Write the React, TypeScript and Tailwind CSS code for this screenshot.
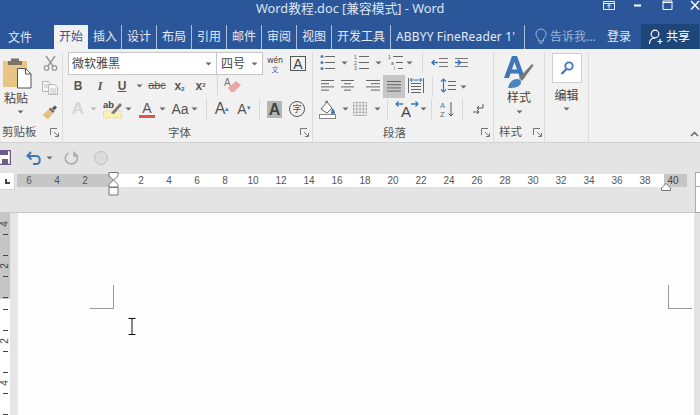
import React from "react";

// Word ribbon screenshot, everything is fixed to the 700x415 window
const tabs = [
  ["插入", "w-[34px]"],
  ["设计", "w-[35px]"],
  ["布局", "w-[35px]"],
  ["引用", "w-[35px]"],
  ["邮件", "w-[35px]"],
  ["审阅", "w-[35px]"],
  ["视图", "w-[35px]"],
  ["开发工具", "w-[59px]"],
];

const rulerMid = [2, 4, 6, 8, 10, 12, 14, 16, 18, 20, 22, 24, 26, 28, 30, 32, 34, 36, 38];

function Arrow({ className = "" }: { className?: string }) {
  return (
    <svg width="7" height="4" viewBox="0 0 7 4" className={className}>
      <path d="M0.5 0.5h6L3.5 3.5z" fill="#6a6a6a" />
    </svg>
  );
}

function Launcher() {
  return (
    <svg width="9" height="9" viewBox="0 0 9 9">
      <path d="M0.5 7V0.5H7M8.5 8.5L4 4M8.5 5v3.5H5" fill="none" stroke="#777" strokeWidth="1" />
    </svg>
  );
}

function Sep({ className = "" }: { className?: string }) {
  return <div className={`w-px h-[21px] bg-[#d8d8d8] shrink-0 ${className}`} />;
}

function Lines({ kind }: { kind: "left" | "center" | "right" | "justify" }) {
  const rows: [number, number][] =
    kind === "left"
      ? [[1, 14], [1, 9], [1, 14], [1, 9]]
      : kind === "center"
        ? [[1, 14], [4, 11], [1, 14], [4, 11]]
        : kind === "right"
          ? [[1, 15], [6, 15], [1, 15], [6, 15]]
          : [[1, 15], [1, 15], [1, 15], [1, 15]];
  return (
    <svg width="16" height="13" viewBox="0 0 16 13" className="block">
      {rows.map(([a, b], i) => (
        <path key={i} d={`M${a} ${1.5 + i * 3.2}H${b}`} stroke="#666" strokeWidth="1" />
      ))}
    </svg>
  );
}

function ListIcon({ kind }: { kind: "bullet" | "number" | "multi" }) {
  return (
    <svg width="15" height="17" viewBox="0 0 15 17">
      {kind === "bullet" && (
        <g fill="#4a7fb5">
          <circle cx="2" cy="2.5" r="1.5" />
          <circle cx="2" cy="8.5" r="1.5" />
          <circle cx="2" cy="14.5" r="1.5" />
        </g>
      )}
      {kind === "number" && (
        <g fill="#555" fontSize="5" fontFamily="Liberation Sans, sans-serif">
          <text x="0" y="5">1</text>
          <text x="0" y="11">2</text>
          <text x="0" y="16">3</text>
        </g>
      )}
      {kind === "multi" && (
        <g fill="#555" fontSize="5" fontFamily="Liberation Sans, sans-serif">
          <text x="0" y="5">1</text>
          <text x="3" y="11">a</text>
          <text x="6" y="16">i</text>
        </g>
      )}
      <path
        d={kind === "multi" ? "M5 2.5H15M8 8.5H15M10 14.5H15" : "M5 2.5H15M5 8.5H15M5 14.5H15"}
        stroke="#666"
        strokeWidth="1"
      />
    </svg>
  );
}

function PasteIcon() {
  return (
    <svg width="30" height="32" viewBox="0 0 30 32">
      <rect x="0" y="4" width="24" height="26" fill="#e9c583" />
      <path d="M8 4V1.5h8V4h3v4H5V4z" fill="#7d7468" />
      <path d="M14.5 11.5h8l5.5 5.5v14h-13.5z" fill="#fff" stroke="#555" strokeWidth="1" />
      <path d="M22.5 11.5V17H28" fill="none" stroke="#555" strokeWidth="1" />
    </svg>
  );
}

function CutIcon() {
  return (
    <svg width="15" height="16" viewBox="0 0 15 16">
      <path d="M3 1L10 11M12 1L5 11" stroke="#9a9a9a" strokeWidth="1.6" />
      <circle cx="3.5" cy="13" r="2.3" fill="none" stroke="#9a9a9a" strokeWidth="1.3" />
      <circle cx="11.5" cy="13" r="2.3" fill="none" stroke="#9a9a9a" strokeWidth="1.3" />
    </svg>
  );
}

function CopyIcon() {
  return (
    <svg width="16" height="14" viewBox="0 0 16 14">
      <path d="M0.5 0.5h6l2 2v8h-8z" fill="#f6f6f6" stroke="#b5b5b5" />
      <path d="M6.5 3.5h6l3 3v7h-9z" fill="#f6f6f6" stroke="#b5b5b5" />
      <path d="M8 8h6M8 10h6M8 12h6M2 4h4M2 6h4" stroke="#c4c4c4" />
    </svg>
  );
}

function BrushIcon() {
  return (
    <svg width="16" height="15" viewBox="0 0 16 15">
      <path d="M0.5 10L7 4l4 4-5 6.5z" fill="#e7c07c" />
      <path d="M7 4l4 4 1.5-1.5-4-4z" fill="#666" />
      <path d="M10 3l3-2.5 2 2-3 3z" fill="#555" />
    </svg>
  );
}

function HighlightIcon() {
  return (
    <svg width="20" height="19" viewBox="0 0 20 19">
      <rect x="0.5" y="11" width="18" height="7" fill="#fbf1b4" stroke="#e6d47a" strokeDasharray="1.5 1" />
      <text x="0" y="8" fontSize="9.5" fill="#444" fontFamily="Liberation Sans, sans-serif" fontWeight="700">ab</text>
      <path d="M8 13L17 3l2 2-8 9z" fill="#777" />
    </svg>
  );
}

function EraserIcon() {
  return (
    <svg width="20" height="17" viewBox="0 0 20 17">
      <text x="1" y="9" fontSize="10" fill="#777" fontFamily="Liberation Sans, sans-serif">A</text>
      <path d="M5 11l8-7 5 4-7 7H8z" fill="#eca5a5" />
    </svg>
  );
}

function ShadingIcon() {
  return (
    <svg width="18" height="19" viewBox="0 0 18 19">
      <path d="M2 9l6-7 5 6-5 5z" fill="#fff" stroke="#666" />
      <path d="M13 8c2 2 3 3 3 4.500a2 2 0 01-4 0z" fill="#4a7fb5" />
      <path d="M6 2l3-1" stroke="#666" />
      <rect x="0.500" y="14.500" width="16" height="4" fill="#fff" stroke="#888" />
    </svg>
  );
}

function BorderIcon() {
  return (
    <svg width="14" height="14" viewBox="0 0 14 14">
      <path d="M0.500 0.500h13v13h-13zM7 0.500v13M0.500 7h13M3.750 0.500v13M10.250 0.500v13M0.500 3.750h13M0.500 10.250h13" fill="none" stroke="#888" strokeDasharray="1 1" />
    </svg>
  );
}

function StyleIcon() {
  return (
    <svg width="30" height="33" viewBox="0 0 30 33">
      <path d="M0 22L8 0h5l8 22h-5l-1.500-4.500H6.500L5 22z M8 13.500h5L10.500 6z" fill="#3f77b5" fillRule="evenodd" />
      <path d="M15 22L28 8l1.500 1.500L18 25z" fill="#777" />
      <path d="M4 32c1-5 4-9 9-9 4 0 5 3 3 6-3 3-8 3-12 3z" fill="#4a85c2" />
    </svg>
  );
}

function SearchIcon() {
  return (
    <svg width="14" height="15" viewBox="0 0 14 15">
      <circle cx="9" cy="5" r="3.700" fill="none" stroke="#3f77b5" strokeWidth="1.800" />
      <path d="M6.500 8L1.500 13" stroke="#3f77b5" strokeWidth="2.200" />
    </svg>
  );
}

export default function App() {
  const ui = "font-['Noto_Sans','Noto_Sans_CJK_SC',sans-serif]";
  return (
    <div className={`w-[700px] h-[415px] overflow-hidden relative flex flex-col bg-[#e4e4e4] ${ui}`}>
      {/* title bar */}
      <div className="h-[24px] bg-[#2b579a] shrink-0 flex items-start pl-[256px] text-[12.75px] text-[#dbe5f3]">
        <span className="w-[344px] whitespace-nowrap leading-[17px]">Word教程.doc [兼容模式] - Word</span>
        <svg width="100" height="14" viewBox="0 0 100 14" className="shrink-0">
          <path d="M3.500 1.500h11v8h-11zM3.500 3.500h11M9 8.500V4.500M7 6.500l2-2 2 2" fill="none" stroke="#e8eef7" />
          <path d="M34 5.500h7" stroke="#fff" strokeWidth="2" />
          <path d="M63 1h9v8.500h-9zM63 2.500h9" fill="none" stroke="#fff" />
          <path d="M91 1l8 8.500M99 1l-8 8.500" stroke="#fff" strokeWidth="1.500" />
        </svg>
      </div>

      {/* tabs */}
      <div className="h-[25px] bg-[#2b579a] shrink-0 flex items-stretch text-[12px] text-[#e3eaf5] whitespace-nowrap">
        <div className="w-[54px] pl-[8px] pt-[5px]">文件</div>
        <div className="w-[34px] mt-px bg-[#f1f1f1] text-[#2b579a] text-center pt-[3px]">开始</div>
        <div className="w-[5px]" />
        {tabs.map(([t, w]) => (
          <div key={t} className={`${w} flex justify-between items-start pt-[4px]`}>
            <span>{t}</span>
            <span className="w-px h-[24px] -mt-[3px] bg-[#a9bfdc] mr-[5px]" />
          </div>
        ))}
        <div className="w-[129px] flex justify-between items-start pt-[4px] text-[12px]">
          <span className="tracking-[0.15px]">ABBYY FineReader 1'</span>
          <span className="w-px h-[24px] -mt-[3px] bg-[#a9bfdc]" />
        </div>
        <div className="w-[10px]" />
        <svg width="12" height="17" viewBox="0 0 12 17" className="mt-[4px] shrink-0">
          <path d="M3.500 11C2 9.500 1 8 1 6a5 5 0 0110 0c0 2-1 3.500-2.500 5v2h-5zM4 15h4" fill="none" stroke="#9db5d6" />
        </svg>
        <span className="w-[60px] pl-[3px] pt-[4px] text-[#9db5d6]">告诉我...</span>
        <span className="w-[34px] pt-[4px]">登录</span>
        <div className="w-[58px] bg-[#1d4679] flex items-center pl-[8px] gap-[2px]">
          <svg width="15" height="16" viewBox="0 0 15 16">
            <circle cx="6" cy="5" r="3.800" fill="none" stroke="#fff" strokeWidth="1.200" />
            <path d="M0.500 15c0-4 2-6 5.500-6M11 10v5M8.500 12.500h5" fill="none" stroke="#fff" strokeWidth="1.200" />
          </svg>
          <span className="text-white">共享</span>
        </div>
      </div>

      {/* ribbon */}
      <div className="h-[94px] bg-[#f1f1f1] border-b border-[#d2d2d2] shrink-0 flex items-stretch pt-[3px] text-[#444]">
        {/* clipboard */}
        <div className="w-[63px] border-r border-[#dcdcdc] flex flex-col shrink-0">
          <div className="h-[71px] flex">
            <div className="w-[37px] pl-[3px] pt-[5px] flex flex-col">
              <PasteIcon />
              <span className="text-[12px] leading-[16px] mt-[2px] pl-[1px]">粘贴</span>
              <Arrow className="ml-[14px] mt-[3px]" />
            </div>
            <div className="w-[25px] flex flex-col items-center pl-[1px] gap-[10px] pt-[3px]">
              <CutIcon />
              <CopyIcon />
              <BrushIcon />
            </div>
          </div>
          <div className="h-[20px] flex items-center justify-between pl-[2px] pr-[3px] text-[11.500px] text-[#555]">
            <span>剪贴板</span>
            <Launcher />
          </div>
        </div>

        {/* font */}
        <div className="w-[250px] border-r border-[#dcdcdc] flex flex-col shrink-0">
          <div className="h-[23px] flex items-center pl-[5px]">
            <div className="w-[149px] h-[23px] bg-white border border-[#c6c6c6] flex items-center justify-between pl-[3px] pr-[4px] text-[12px]">
              <span>微软雅黑</span>
              <Arrow />
            </div>
            <div className="w-[46px] h-[23px] bg-white border border-l-0 border-[#c6c6c6] flex items-center justify-between pl-[4px] pr-[4px] text-[12px]">
              <span>四号</span>
              <Arrow />
            </div>
            <div className="w-[18px] ml-[3px] flex flex-col items-center text-[#444]">
              <span className="text-[8px] leading-[11px]">wén</span>
              <span className="text-[7px] leading-[9px] text-[#3f77b5]">文</span>
            </div>
            <div className="w-[16px] h-[15px] ml-[6px] border border-[#555] flex items-center justify-center text-[14px] leading-none font-['Liberation_Sans',sans-serif]">
              A
            </div>
          </div>
          <div className="h-[21px] flex items-center pl-[4px] font-['Liberation_Sans',sans-serif] text-[#555]">
            <span className="w-[22px] text-center text-[12px] font-bold">B</span>
            <span className="w-[22px] text-center text-[12px] font-bold italic font-['Liberation_Serif',serif]">I</span>
            <span className="w-[22px] text-center text-[12px] font-bold underline">U</span>
            <span className="w-[12px] flex justify-center"><Arrow /></span>
            <span className="w-[24px] text-center text-[11px] line-through">abc</span>
            <span className="w-[21px] text-center text-[12px] font-bold">x<sub className="text-[6px]">2</sub></span>
            <span className="w-[21px] text-center text-[12px] font-bold">x<sup className="text-[6px]">2</sup></span>
            <Sep className="ml-[6px] mr-[5px]" />
            <EraserIcon />
          </div>
          <div className="h-[27px] flex items-center pl-[4px] font-['Liberation_Sans',sans-serif] text-[#555]">
            <span className="w-[22px] text-center text-[17px] font-bold text-[#d6d6d6]">A</span>
            <span className="w-[8px] flex justify-center"><Arrow className="opacity-40" /></span>
            <span className="ml-[6px] w-[20px]"><HighlightIcon /></span>
            <span className="w-[8px] ml-[1px] flex justify-center"><Arrow /></span>
            <span className="ml-[5px] w-[20px] flex flex-col items-center">
              <span className="text-[14px] leading-[14px]">A</span>
              <span className="w-[16px] h-[3px] bg-[#e0524a]" />
            </span>
            <span className="w-[8px] ml-[1px] flex justify-center"><Arrow /></span>
            <span className="ml-[4px] w-[20px] text-center text-[14px]">Aa</span>
            <span className="w-[8px] flex justify-center"><Arrow /></span>
            <Sep className="ml-[8px] mr-[5px]" />
            <span className="w-[20px] text-[16px] text-center whitespace-nowrap">A<sup className="text-[7px] text-[#3f77b5]">▴</sup></span>
            <span className="w-[20px] ml-[2px] text-[14px] text-center whitespace-nowrap">A<sup className="text-[7px] text-[#3f77b5]">▾</sup></span>
            <Sep className="ml-[5px] mr-[5px]" />
            <span className="w-[15px] h-[17px] ml-[2px] bg-[#b5b5b5] text-center text-[16px] leading-[17px] font-bold text-[#444]">A</span>
            <span className="w-[16px] h-[16px] ml-[7px] rounded-full border border-[#555] flex items-center justify-center text-[9px] font-['Noto_Sans_CJK_SC',sans-serif]">字</span>
          </div>
          <div className="h-[20px] flex items-center text-[11.500px] text-[#555] pr-[3px]">
            <span className="ml-[105px]">字体</span>
            <span className="ml-auto"><Launcher /></span>
          </div>
        </div>

        {/* paragraph */}
        <div className="w-[181px] border-r border-[#dcdcdc] flex flex-col shrink-0">
          <div className="h-[23px] flex items-center pl-[7px] pb-[2px]">
            <ListIcon kind="bullet" />
            <span className="w-[19px] flex justify-center"><Arrow /></span>
            <ListIcon kind="number" />
            <span className="w-[19px] flex justify-center"><Arrow /></span>
            <ListIcon kind="multi" />
            <span className="w-[13px] flex justify-center"><Arrow /></span>
            <Sep className="ml-[6px] mr-[8px]" />
            <svg width="38" height="13" viewBox="0 0 38 13">
              <path d="M8 2.500H17M8 6.500H17M8 10.500H17M24 2.500H37M30 6.500H37M24 10.500H37" stroke="#777" />
              <path d="M7 6.500H1M3.500 4L1 6.500 3.500 9M24 6.500H29M27 4l2.500 2.500L27 9" fill="none" stroke="#3f77b5" strokeWidth="1.500" />
            </svg>
          </div>
          <div className="h-[23px] flex items-center pl-[7px]">
            <span className="w-[20px] pb-[2px]"><Lines kind="left" /></span>
            <span className="w-[25px] pb-[2px]"><Lines kind="center" /></span>
            <span className="w-[18px] pb-[2px]"><Lines kind="right" /></span>
            <span className="w-[22px] h-[23px] bg-[#c6c6c6] flex items-center justify-center"><Lines kind="justify" /></span>
            <span className="w-[16px] ml-[3px] pb-[2px]">
              <svg width="16" height="17" viewBox="0 0 16 17" className="block">
                <path d="M0.500 1v15M15.500 1v15M3 6.500h10M3 9.500h10M3 12.500h10M3 15.500h10" stroke="#666" fill="none" />
                <path d="M2 3h12M4 1L2 3l2 2M12 1l2 2-2 2" stroke="#3f77b5" fill="none" />
              </svg>
            </span>
            <Sep className="ml-[8px] mr-[7px]" />
            <svg width="16" height="17" viewBox="0 0 16 17" className="mb-[2px]">
              <path d="M3.500 2v13M1 4.500L3.500 2 6 4.500M1 12.500L3.500 15 6 12.500" stroke="#3f77b5" fill="none" strokeWidth="1.200" />
              <path d="M8 4.500h8M8 8.500h8M8 12.500h8" stroke="#666" />
            </svg>
            <span className="w-[14px] flex justify-center"><Arrow /></span>
          </div>
          <div className="h-[25px] flex items-center pl-[6px] pb-[2px]">
            <ShadingIcon />
            <span className="w-[16px] flex justify-center"><Arrow /></span>
            <BorderIcon />
            <span className="w-[20px] flex justify-center"><Arrow /></span>
            <Sep className="mr-[7px]" />
            <span className="w-[24px] flex flex-col items-center">
              <svg width="24" height="19" viewBox="0 0 24 19">
                <path d="M1 4h7M3.500 1.500L1 4l2.500 2.500M23 4h-7M20.500 1.500L23 4l-2.500 2.500" stroke="#3f77b5" fill="none" strokeWidth="1.300" />
                <text x="6" y="17" fontSize="15" fill="#444" fontFamily="Liberation Sans, sans-serif">A</text>
              </svg>
            </span>
            <span className="w-[8px] flex justify-center"><Arrow /></span>
            <Sep className="ml-[4px] mr-[8px]" />
            <svg width="15" height="17" viewBox="0 0 15 17">
              <text x="0" y="7" fontSize="7.500" fill="#3f77b5" fontFamily="Liberation Sans, sans-serif">A</text>
              <text x="0" y="16" fontSize="7.500" fill="#666" fontFamily="Liberation Sans, sans-serif">Z</text>
              <path d="M11 1v14M8.500 12.500L11 15l2.500-2.500" stroke="#555" fill="none" />
            </svg>
            <Sep className="ml-[7px] mr-[9px]" />
            <svg width="12" height="12" viewBox="0 0 12 12">
              <path d="M11 1v4H5M7 3L5 5l2 2M1 9h6M5 7l2 2-2 2" stroke="#555" fill="none" />
            </svg>
          </div>
          <div className="h-[20px] flex items-center text-[11.500px] text-[#555] pr-[3px]">
            <span className="ml-[70px]">段落</span>
            <span className="ml-auto"><Launcher /></span>
          </div>
        </div>

        {/* styles */}
        <div className="w-[51px] border-r border-[#dcdcdc] flex flex-col shrink-0">
          <div className="h-[71px] flex flex-col items-center pt-[4px]">
            <StyleIcon />
            <span className="text-[12px] leading-[16px] mt-[1px]">样式</span>
            <Arrow className="mt-[4px]" />
          </div>
          <div className="h-[20px] flex items-center justify-between pl-[5px] pr-[2px] text-[11.500px] text-[#555]">
            <span>样式</span>
            <Launcher />
          </div>
        </div>

        {/* editing */}
        <div className="w-[44px] border-r border-[#dcdcdc] flex flex-col items-center shrink-0">
          <div className="w-[30px] h-[30px] mt-[1px] bg-white border border-[#cfcfcf] flex items-center justify-center">
            <SearchIcon />
          </div>
          <span className="text-[12px] leading-[16px] mt-[5px]">编辑</span>
          <Arrow className="mt-[3px]" />
        </div>

        <div className="flex-1 flex items-end justify-end pr-[1px] pb-[5px]">
          <svg width="9" height="6" viewBox="0 0 9 6">
            <path d="M1 5l3.500-3.500L8 5" fill="none" stroke="#666" strokeWidth="1.500" />
          </svg>
        </div>
      </div>

      {/* quick access */}
      <div className="h-[29px] shrink-0 flex items-center bg-[#e4e4e4]">
        <svg width="11" height="15" viewBox="0 0 11 15" className="shrink-0">
          <path d="M-3 0.500h13.500v14H-3z" fill="#fff" stroke="#6d5a8c" strokeWidth="1.500" />
          <path d="M-1 1h9v4h-9zM2 9h6v5H2z" fill="#6d5a8c" />
        </svg>
        <svg width="16" height="14" viewBox="0 0 16 14" className="ml-[15px] shrink-0">
          <path d="M5 1L1.500 5 5.500 8.500M2 5h8c5 0 5 8 0 8H7" fill="none" stroke="#3f77b5" strokeWidth="2" />
        </svg>
        <Arrow className="ml-[4px] shrink-0" />
        <svg width="15" height="15" viewBox="0 0 15 15" className="ml-[11px] shrink-0">
          <path d="M10 1.500v4.500h4.500M9.500 2.500a6 6 0 11-5 .3" fill="none" stroke="#a9a9a9" strokeWidth="1.500" />
        </svg>
        <div className="w-[14px] h-[14px] ml-[15px] rounded-full bg-[#dcdcdc] border border-[#c0c0c0]" />
      </div>

      {/* horizontal ruler */}
      <div className="h-[41px] shrink-0 flex items-start relative bg-[#e4e4e4] border-b border-[#c8c8c8]">
        <div className="w-[15px] h-[17px] mt-[1px] bg-white border-r border-b border-[#d4d4d4] flex items-center justify-center">
          <div className="w-[5px] h-[5px] border-l-2 border-b-2 border-[#444] ml-[1px]" />
        </div>
        <div className="h-[13px] ml-[2px] mt-[2px] flex items-stretch text-[10px] leading-[13px] text-[#555] font-['Liberation_Sans',sans-serif]">
          <div className="w-[96px] bg-[#c6c6c6] overflow-hidden flex">
            {[6, 4, 2].map((n, i) => (
              <span key={i} className={`w-[28px] text-center shrink-0 ${i === 0 ? "-ml-[2px]" : ""}`}>{n}</span>
            ))}
          </div>
          <div className="w-[551px] bg-white flex pl-[14px]">
            {rulerMid.map((n) => (
              <span key={n} className="w-[28px] text-center shrink-0">{n}</span>
            ))}
          </div>
          <div className="w-[23px] bg-[#c6c6c6] flex">
            <span className="w-[28px] text-center shrink-0 -ml-[5px] text-[#444]">40</span>
          </div>
        </div>
        {/* indent markers */}
        <svg width="12" height="24" viewBox="0 0 12 24" className="absolute left-[108px] top-0">
          <path d="M1 0.500h9V4L5.500 8 1 4zM5.500 8L10 12.500V15H1v-2.500z" fill="#fff" stroke="#777" />
          <path d="M1 15.500h9v7.500H1z" fill="#fff" stroke="#777" />
        </svg>
        <svg width="10" height="8" viewBox="0 0 10 8" className="absolute left-[661px] top-[11px]">
          <path d="M0.500 7.500V5L5 0.500 9.500 5v2.500z" fill="#fff" stroke="#777" />
        </svg>
        {/* scrollbar head */}
        <div className="absolute left-[695px] top-0 w-[5px] h-[41px] bg-white border border-r-0 border-[#aaa]">
          <div className="mt-[13px] border-t border-[#aaa]" />
        </div>
      </div>

      {/* page area */}
      <div className="flex-1 flex items-stretch min-h-0 relative">
        <div className="w-[10px] shrink-0 flex flex-col text-[10px] text-[#444] font-['Liberation_Sans',sans-serif]">
          <div className="h-[95px] bg-[#c6c6c6] pt-[1px] flex flex-col">
            {["4", "", "2", ""].map((n, i) => (
              <div key={i} className="h-[21px] flex flex-col items-center justify-end shrink-0">
                <span className="h-[12px] leading-[12px] -rotate-90">{n}</span>
                <span className="w-[5px] h-px bg-[#444] mt-[4px]" />
              </div>
            ))}
          </div>
          <div className="flex-1 bg-white flex flex-col">
            <div className="h-[11px] flex flex-col items-center justify-end shrink-0">
              <span className="w-[5px] h-px bg-[#444]" />
            </div>
            {["", "2", "", "4", ""].map((n, i) => (
              <div key={i} className="h-[21px] flex flex-col items-center justify-end shrink-0">
                <span className="h-[12px] leading-[12px] -rotate-90">{n}</span>
                <span className="w-[5px] h-px bg-[#444] mt-[4px]" />
              </div>
            ))}
          </div>
        </div>
        <div className="w-[8px] shrink-0 bg-[#e6e6e6]" />
        <div className="w-[676px] bg-[#fdfdfd] flex justify-between items-start pt-[72px] pl-[72px] pr-[2px] shrink-0">
          <div className="w-[24px] h-[24px] border-r border-b border-[#999]" />
          <div className="w-[24px] h-[24px] border-l border-b border-[#999]" />
        </div>
        <div className="flex-1 bg-[#e3e3e3]" />
        {/* text cursor */}
        <svg width="8" height="17" viewBox="0 0 8 17" className="absolute left-[128px] top-[105px]">
          <path d="M0.500 0.500h7M4 0.500v16M0.500 16.500h7" stroke="#111" fill="none" />
        </svg>
      </div>
    </div>
  );
}
